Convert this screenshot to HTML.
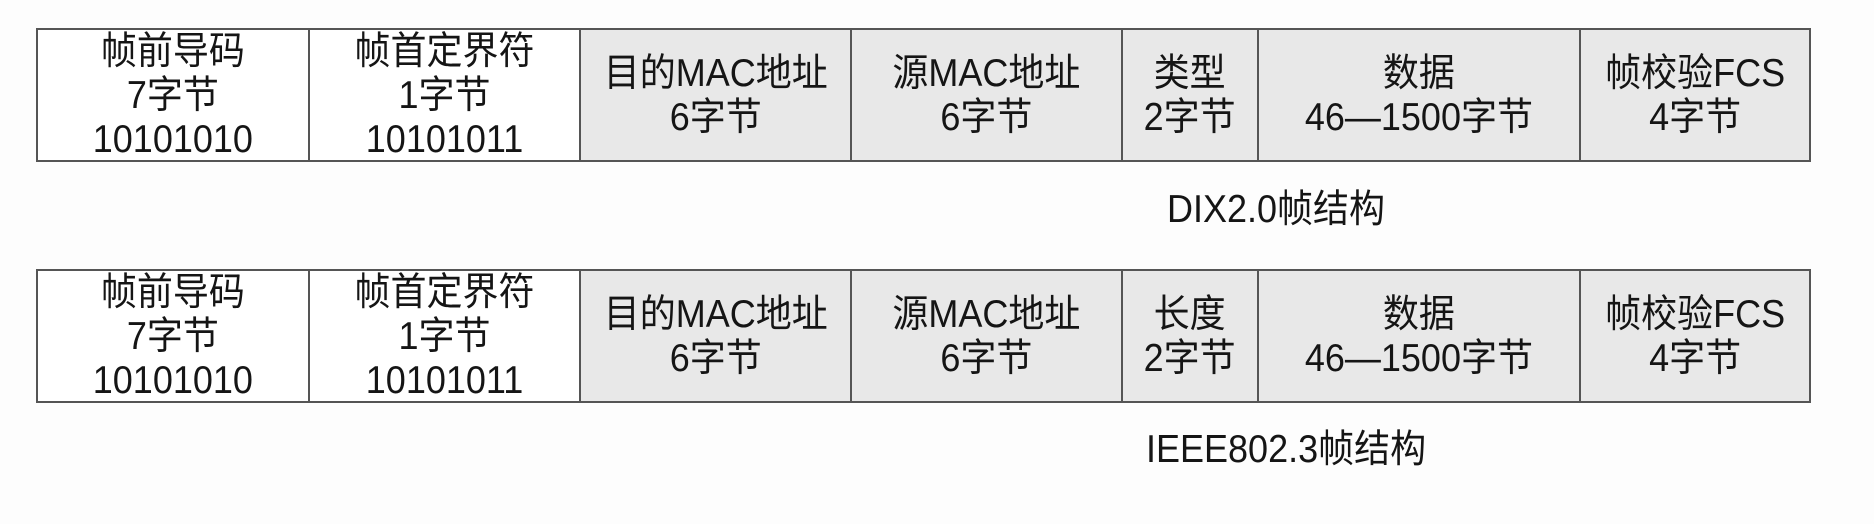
<!DOCTYPE html>
<html><head><meta charset="utf-8"><style>
html,body{margin:0;padding:0;background:#fdfdfd;width:1874px;height:524px;overflow:hidden;position:relative;
font-family:"Liberation Sans","Noto Sans CJK SC",sans-serif;color:#151515}
.t{position:absolute;left:36px;width:1775px;height:134px;border:2px solid #555;box-sizing:border-box;background:#e8e8e8;display:flex}
.c{box-sizing:border-box;border-right:2px solid #555;display:flex;align-items:center;justify-content:center;flex-direction:column;font-size:36px;line-height:44px;text-align:center;white-space:nowrap;overflow:hidden}
.c div{transform:scaleY(1.08)}
.c:last-child{border-right:none}
.w{background:#fff}
.lbl{position:absolute;font-size:36px;white-space:nowrap;transform:scaleY(1.08);transform-origin:left center}
</style></head><body>
<div class="t" style="top:28px">
<div class="c w" style="width:272px"><div>帧前导码</div><div>7字节</div><div>10101010</div></div>
<div class="c w" style="width:272px"><div>帧首定界符</div><div>1字节</div><div>10101011</div></div>
<div class="c" style="width:271px"><div>目的MAC地址</div><div>6字节</div></div>
<div class="c" style="width:271px"><div>源MAC地址</div><div>6字节</div></div>
<div class="c" style="width:136px"><div>类型</div><div>2字节</div></div>
<div class="c" style="width:323px"><div>数据</div><div>46—1500字节</div></div>
<div class="c" style="width:228px"><div>帧校验FCS</div><div>4字节</div></div>
</div>
<div class="lbl" style="left:1167px;top:180px">DIX2.0帧结构</div>
<div class="t" style="top:269px">
<div class="c w" style="width:272px"><div>帧前导码</div><div>7字节</div><div>10101010</div></div>
<div class="c w" style="width:272px"><div>帧首定界符</div><div>1字节</div><div>10101011</div></div>
<div class="c" style="width:271px"><div>目的MAC地址</div><div>6字节</div></div>
<div class="c" style="width:271px"><div>源MAC地址</div><div>6字节</div></div>
<div class="c" style="width:136px"><div>长度</div><div>2字节</div></div>
<div class="c" style="width:323px"><div>数据</div><div>46—1500字节</div></div>
<div class="c" style="width:228px"><div>帧校验FCS</div><div>4字节</div></div>
</div>
<div class="lbl" style="left:1146px;top:420px">IEEE802.3帧结构</div>
</body></html>
